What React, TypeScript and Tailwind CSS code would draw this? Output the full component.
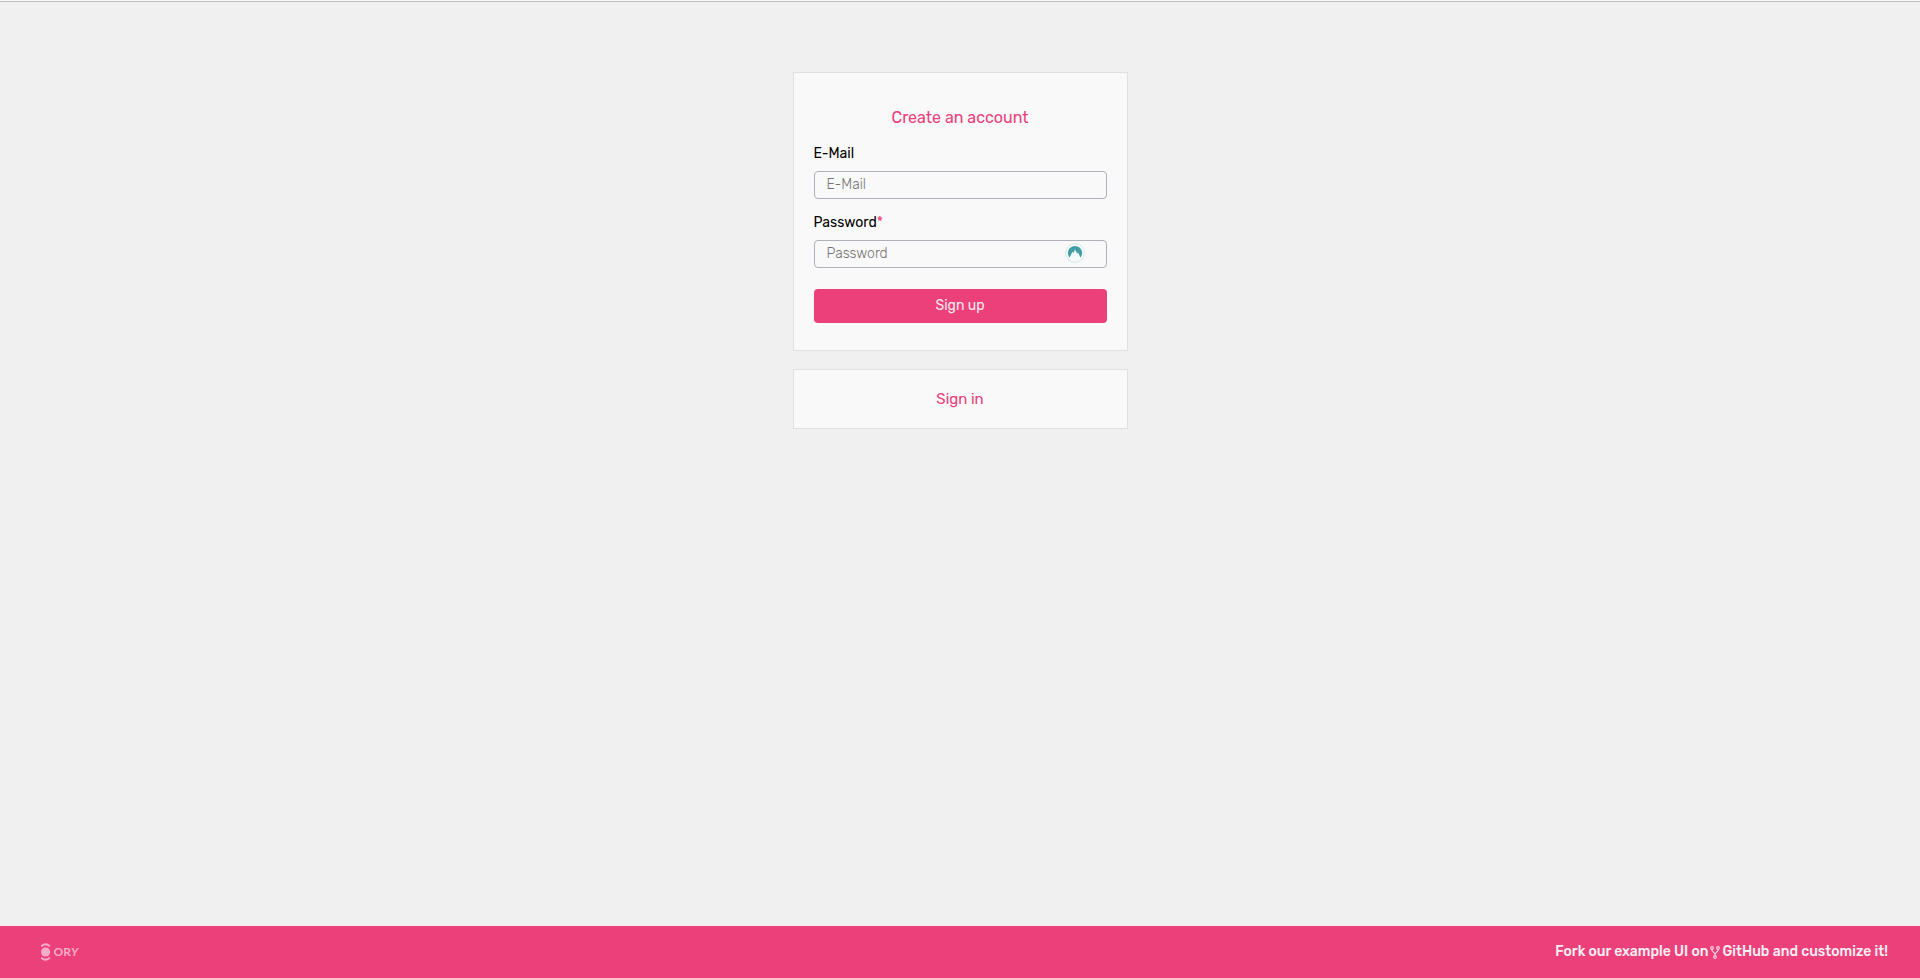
import type { ReactNode } from "react";

function Field({
  id,
  label,
  type,
  required,
  children,
}: {
  id: string;
  label: string;
  type: string;
  required?: boolean;
  children?: ReactNode;
}) {
  return (
    <div>
      <label htmlFor={id} className="mb-[7px] block text-sm leading-5 text-black">
        {label}
        {required && <span className="text-[#ec407a]">*</span>}
      </label>
      <div className="relative">
        <input
          id={id}
          name={id}
          type={type}
          placeholder={label}
          required={required}
          className="block h-7 w-full rounded border border-[#b0b0b8] bg-[#f9f9fa] px-3 pb-0.5 text-sm font-light leading-5 outline-none placeholder:text-[#757575] focus:border-[#ec407a]"
        />
        {children}
      </div>
    </div>
  );
}

function PasswordManagerIcon() {
  return (
    <svg viewBox="0 0 20 20" className="absolute right-[22px] top-[3px] size-5" aria-hidden="true">
      <circle cx="10" cy="10" r="9.4" fill="#f5fafa" stroke="#cfe4e6" strokeWidth="0.9" />
      <path
        d="M4.6 14.6A7.1 7.1 0 1 1 15.4 14.6L13 9.2 12.2 10.8 10 6.6 8.6 9.4 8.9 10.4 7.4 8.8Z"
        fill="#419fa4"
      />
    </svg>
  );
}

function OryLogo() {
  return (
    <svg viewBox="0 0 40 18" className="h-[18px] w-10" role="img" aria-label="ORY">
      <g fill="none" stroke="#f7adc8" strokeWidth="1.8">
        <path d="M0.2 3.4Q4.5 -0.8 9 3.4" />
        <path d="M0.2 14.6Q4.5 18.8 9 14.6" />
      </g>
      <circle cx="4.6" cy="9" r="4.6" fill="#f7adc8" />
      <text x="12.5" y="13.3" fill="#f7adc8" className="font-['Lato',sans-serif] text-[12px] font-bold">
        OR
        <tspan className="italic">Y</tspan>
      </text>
    </svg>
  );
}

function ForkIcon() {
  return (
    <svg
      viewBox="0 0 10 13"
      className="h-[13px] w-[10px]"
      fill="none"
      stroke="#fbd3e1"
      strokeWidth="1.2"
      aria-hidden="true"
    >
      <circle cx="2" cy="2" r="1.3" />
      <circle cx="8" cy="2" r="1.3" />
      <circle cx="5" cy="11" r="1.3" />
      <path d="M2 3.3V4.6L5 7.8L8 4.6V3.3M5 7.4V9.7" />
    </svg>
  );
}

export default function App() {
  return (
    <div className="flex min-h-screen flex-col border-t border-[#f7f7f7] bg-[#f0f0f0] font-['Rubik','Roboto',sans-serif]">
      <main className="flex flex-1 flex-col items-center gap-[18px] border-t border-[#c0c0c0] pt-[70px]">
        <section className="w-[335px] border border-[#e0e0e0] bg-[#f9f9f9] px-5 pb-[27px] pt-[33px]">
          <h1 className="mb-[14px] text-center text-base leading-6 text-[#ec407a]">
            Create an account
          </h1>
          <form className="flex flex-col" onSubmit={(e) => e.preventDefault()}>
            <div className="mb-[21px] flex flex-col gap-[14px]">
              <Field id="email" label="E-Mail" type="email" />
              <Field id="password" label="Password" type="password" required>
                <PasswordManagerIcon />
              </Field>
            </div>
            <button
              type="submit"
              className="h-[34px] rounded bg-[#ec407a] text-sm leading-5 text-[#fce9f0]"
            >
              Sign up
            </button>
          </form>
        </section>

        <section className="w-[335px] border border-[#e0e0e0] bg-[#f9f9f9] py-[17px] text-center">
          <a href="#signin" className="block text-[15px] leading-6 text-[#ec407a]">
            Sign in
          </a>
        </section>
      </main>

      <footer className="flex h-[52px] items-center justify-between bg-[#ec407a] pl-[41px] pr-8">
        <a href="#ory">
          <OryLogo />
        </a>
        <a
          href="#github"
          className="flex items-center gap-0.5 text-sm font-medium leading-5 text-[#fdf0f5]"
        >
          Fork our example UI on
          <ForkIcon />
          GitHub and customize it!
        </a>
      </footer>
    </div>
  );
}
